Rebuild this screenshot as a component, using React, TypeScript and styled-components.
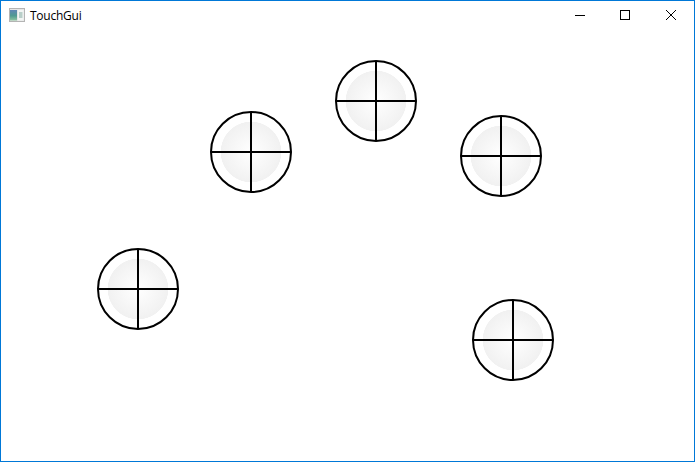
import React from "react";
import styled, { createGlobalStyle } from "styled-components";

const points = [
  { id: 1, x: 138, y: 288 },
  { id: 2, x: 251, y: 151 },
  { id: 3, x: 376, y: 100 },
  { id: 4, x: 501, y: 155 },
  { id: 5, x: 513, y: 339 },
];

const App: React.FC = () => {
  return (
    <>
      <GlobalStyle />
      <Window>
        <TitleBar>
          <AppIcon viewBox="0 0 16 14" width="16" height="14">
            <defs>
              <linearGradient id="pane" x1="0" y1="0" x2="0" y2="1">
                <stop offset="0" stopColor="#5f86b5" />
                <stop offset="0.55" stopColor="#4f9a90" />
                <stop offset="1" stopColor="#8fc4a0" />
              </linearGradient>
            </defs>
            <rect x="0.5" y="0.5" width="15" height="13" fill="#e6e6e6" stroke="#b4b4b4" />
            <rect x="1" y="2" width="7" height="10.5" fill="url(#pane)" />
            <rect x="9" y="2" width="5.5" height="10.5" fill="#f2f5f4" />
            <rect x="10" y="4" width="3.5" height="6" fill="#b9cfc9" />
          </AppIcon>
          <Title>TouchGui</Title>
          <Controls>
            <ControlButton>
              <MinimizeIcon width="10" height="10" viewBox="0 0 10 10">
                <path d="M0 5.5H10" stroke="#000" fill="none" />
              </MinimizeIcon>
            </ControlButton>
            <ControlButton>
              <svg width="10" height="10" viewBox="0 0 10 10">
                <rect x="0.5" y="0.5" width="9" height="9" stroke="#000" fill="none" />
              </svg>
            </ControlButton>
            <ControlButton>
              <svg width="10" height="10" viewBox="0 0 10 10">
                <path d="M0 0L10 10M10 0L0 10" stroke="#000" fill="none" />
              </svg>
            </ControlButton>
          </Controls>
        </TitleBar>
        <Canvas>
          {points.map((p) => (
            <TouchPoint key={p.id} style={{ left: p.x - 2, top: p.y - 29 }} />
          ))}
        </Canvas>
      </Window>
    </>
  );
};

export default App;

const GlobalStyle = createGlobalStyle`
  html, body {
    margin: 0;
    padding: 0;
    background: #fff;
  }
`;

const Window = styled.div`
  width: 695px;
  height: 462px;
  box-sizing: border-box;
  border: 1px solid #0078d7;
  background: #fff;
  display: flex;
  flex-direction: column;
  overflow: hidden;
`;

const TitleBar = styled.div`
  height: 28px;
  flex: none;
  display: flex;
  align-items: center;
  padding-left: 8px;
`;

const AppIcon = styled.svg`
  flex: none;
`;

const Title = styled.span`
  margin-left: 5px;
  font-family: "Open Sans", "Segoe UI", "Noto Sans", sans-serif;
  font-size: 12px;
  letter-spacing: -0.25px;
  color: #000;
`;

const Controls = styled.div`
  margin-left: auto;
  display: flex;
  height: 100%;
`;

const ControlButton = styled.div`
  width: 46px;
  height: 100%;
  display: flex;
  align-items: center;
  justify-content: center;
`;

const MinimizeIcon = styled.svg`
  margin-left: 2px;
`;

const Canvas = styled.div`
  flex: 1;
  position: relative;
`;

const TouchPoint = styled.div`
  position: absolute;
  width: 82px;
  height: 82px;
  margin: -40px 0 0 -40px;
  box-sizing: border-box;
  border: 2px solid #000;
  border-radius: 50%;
  background: radial-gradient(circle closest-side at center, #ffffff 0, #f1f1f1 30px, #ffffff 30.5px);

  &::before,
  &::after {
    content: "";
    position: absolute;
    background: #000;
  }

  &::before {
    left: 0;
    right: 0;
    top: 38px;
    height: 2px;
  }

  &::after {
    top: 0;
    bottom: 0;
    left: 38px;
    width: 2px;
  }
`;
